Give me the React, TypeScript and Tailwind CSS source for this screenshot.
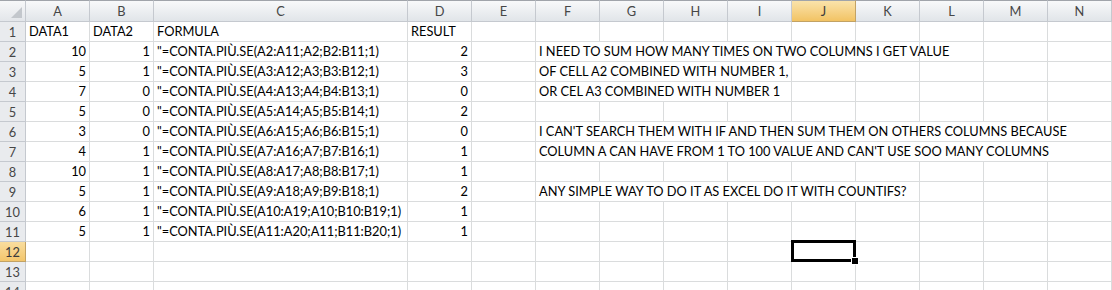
const cols = ["A", "B", "C", "D", "E", "F", "G", "H", "I", "J", "K", "L", "M", "N"];

type Row = { a?: number; b?: number; c?: string; d?: number; note?: string; span?: number };

const data: Row[] = [
  { a: 10, b: 1, d: 2, note: "I NEED TO SUM HOW MANY TIMES ON TWO COLUMNS I GET VALUE", span: 6 },
  { a: 5, b: 1, d: 3, note: "OF CELL A2 COMBINED WITH NUMBER 1,", span: 4 },
  { a: 7, b: 0, d: 0, note: "OR CEL A3 COMBINED WITH NUMBER 1", span: 4 },
  { a: 5, b: 0, d: 2 },
  { a: 3, b: 0, d: 0, note: "I CAN'T SEARCH THEM WITH IF AND THEN SUM THEM ON OTHERS COLUMNS BECAUSE", span: 9 },
  { a: 4, b: 1, d: 1, note: "COLUMN A CAN HAVE FROM 1 TO 100 VALUE AND CAN'T USE SOO MANY COLUMNS", span: 9 },
  { a: 10, b: 1, d: 1 },
  { a: 5, b: 1, d: 2, note: "ANY SIMPLE WAY TO DO IT AS EXCEL DO IT WITH COUNTIFS?", span: 6 },
  { a: 6, b: 1, d: 1 },
  { a: 5, b: 1, d: 1 },
];

const spanClass: Record<number, string> = {
  4: "col-span-4",
  6: "col-span-6",
  9: "col-span-9",
};

const cell = "border-r border-b border-[#dadcdd] px-[3px] flex items-end pb-[2px] leading-[15px] whitespace-nowrap";

function RowHead({ n, active }: { n: number; active?: boolean }) {
  return (
    <div
      className={
        "border-r border-b flex items-center justify-center pt-[1px] leading-[15px] " +
        (active
          ? "bg-gradient-to-b from-[#f9dd9e] to-[#f3c66b] border-[#c2a264] text-[#3b3b3b]"
          : "bg-[#e9ebee] border-[#c5c9cf] text-[#464646]")
      }
    >
      {n}
    </div>
  );
}

function Empty({ n }: { n: number }) {
  return (
    <>
      {Array.from({ length: n }).map((_, i) => (
        <div key={i} className={cell} />
      ))}
    </>
  );
}

export default function App() {
  return (
    <div
      className="w-[1112px] h-[290px] overflow-hidden bg-white text-[12.8px] text-black"
      style={{ fontFamily: "Lato, 'Open Sans', sans-serif" }}
    >
      <div className="grid grid-cols-[26px_64px_64px_254px_64px_64px_64px_64px_64px_64px_64px_64px_64px_64px_64px] grid-rows-[22px] auto-rows-[20px]">
        {/* header row */}
        <div className="relative border-t border-t-[#a0a4aa] border-r border-b border-[#c5c9cf] bg-gradient-to-b from-[#f7f8f9] to-[#e3e6ea]">
          <div className="absolute right-[3px] bottom-[3px] w-0 h-0 border-l-[11px] border-l-transparent border-b-[11px] border-b-[#c3c7cc]" />
        </div>
        {cols.map((c) => (
          <div
            key={c}
            className={
              "border-t border-t-[#a0a4aa] border-r border-b flex items-center justify-center pt-[1px] leading-[15px] " +
              (c === "J"
                ? "bg-gradient-to-b from-[#fae3aa] to-[#f2c363] border-[#c2a264] text-[#3b3b3b]"
                : "bg-gradient-to-b from-[#f8f9fa] to-[#e1e5e9] border-[#c5c9cf] text-[#464646]")
            }
          >
            {c}
          </div>
        ))}

        {/* row 1 */}
        <RowHead n={1} />
        <div className={cell}>DATA1</div>
        <div className={cell}>DATA2</div>
        <div className={cell}>FORMULA</div>
        <div className={cell}>RESULT</div>
        <Empty n={10} />

        {data.map((r, i) => {
          const n = i + 2;
          return (
            <div key={n} className="contents">
              <RowHead n={n} />
              <div className={cell + " justify-end"}>{r.a}</div>
              <div className={cell + " justify-end"}>{r.b}</div>
              <div className={cell}>
                {`"=CONTA.PIÙ.SE(A${n}:A${n + 9};A${n};B${n}:B${n + 9};1)`}
              </div>
              <div className={cell + " justify-end"}>{r.d}</div>
              <div className={cell} />
              {r.note ? (
                <>
                  <div className={cell + " " + spanClass[r.span ?? 4]}>{r.note}</div>
                  <Empty n={9 - (r.span ?? 4)} />
                </>
              ) : (
                <Empty n={9} />
              )}
            </div>
          );
        })}

        {[12, 13, 14].map((n) => (
          <div key={n} className="contents">
            <RowHead n={n} active={n === 12} />
            {cols.map((c) =>
              n === 12 && c === "J" ? (
                <div key={c} className={cell + " relative z-10"}>
                  {/* active cell selection + fill handle */}
                  <div className="absolute -left-[1px] -top-[2px] -right-[1px] -bottom-[1px] border-[3px] border-black" />
                  <div className="absolute -right-[4px] -bottom-[4px] w-[8px] h-[8px] bg-black border border-white" />
                </div>
              ) : (
                <div key={c} className={cell} />
              )
            )}
          </div>
        ))}
      </div>
    </div>
  );
}
